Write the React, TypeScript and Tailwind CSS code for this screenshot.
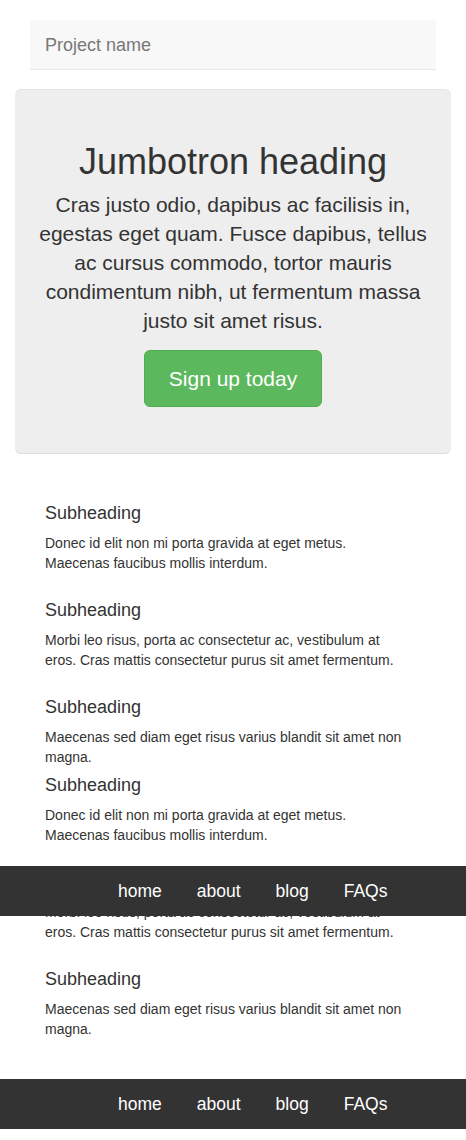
const sections = [
  [
    {
      title: "Subheading",
      body: "Donec id elit non mi porta gravida at eget metus. Maecenas faucibus mollis interdum.",
    },
    {
      title: "Subheading",
      body: "Morbi leo risus, porta ac consectetur ac, vestibulum at eros. Cras mattis consectetur purus sit amet fermentum.",
    },
    {
      title: "Subheading",
      body: "Maecenas sed diam eget risus varius blandit sit amet non magna.",
    },
  ],
  [
    {
      title: "Subheading",
      body: "Donec id elit non mi porta gravida at eget metus. Maecenas faucibus mollis interdum.",
    },
    {
      title: "Subheading",
      body: "Morbi leo risus, porta ac consectetur ac, vestibulum at eros. Cras mattis consectetur purus sit amet fermentum.",
    },
    {
      title: "Subheading",
      body: "Maecenas sed diam eget risus varius blandit sit amet non magna.",
    },
  ],
];

const links = ["home", "about", "blog", "FAQs"];

function NavBar() {
  return (
    <ul className="flex h-[50px] items-center gap-[35px] bg-[#333] pl-[118px] text-[17.5px] leading-[20px] text-white">
      {links.map((l) => (
        <li key={l}>
          <a href="#">{l}</a>
        </li>
      ))}
    </ul>
  );
}

export default function App() {
  return (
    <div className="relative min-h-[1140px] bg-white pt-[20px] font-['Liberation_Sans',Arial,sans-serif] text-[14px] leading-[20px] text-[#333]">
      <div className="px-[15px]">
        <div className="mx-[15px] flex h-[50px] items-center border-b border-[#e7e7e7] bg-[#f8f8f8] px-[15px]">
          <span className="text-[18px] leading-[20px] text-[#777]">Project name</span>
        </div>

        <div className="mt-[19px] flex flex-col items-center rounded-[6px] border-t border-b border-t-[#e4e4e4] border-b-[#dcdcdc] bg-[#eee] px-[20px] pt-[52px] pb-[46px] text-center">
          <h1 className="mb-[8px] text-[36px] leading-[1.1]">Jumbotron heading</h1>
          <p className="mb-[15px] text-[21px] leading-[29px]">
            Cras justo odio, dapibus ac facilisis in, egestas eget quam. Fusce dapibus, tellus ac cursus commodo,
            tortor mauris condimentum nibh, ut fermentum massa justo sit amet risus.
          </p>
          <a
            href="#"
            className="flex h-[57px] items-center rounded-[6px] border border-[#4cae4c] bg-[#5cb85c] px-[24px] text-[21px] leading-[29px] text-white"
          >
            Sign up today
          </a>
        </div>

        <div className="pt-[49px] pr-[41px] pb-[40px] pl-[30px]">
          {sections.map((col, ci) => (
            <div key={ci} className={ci > 0 ? "mt-[8px]" : ""}>
              {col.map((s, i) => (
                <div key={i} className={i > 0 ? "mt-[27px]" : ""}>
                  <h4 className="mb-[10px] text-[18px] leading-[20px]">{s.title}</h4>
                  <p>{s.body}</p>
                </div>
              ))}
            </div>
          ))}
        </div>
      </div>

      <NavBar />

      <div className="absolute top-[866px] right-0 left-0">
        <NavBar />
      </div>
    </div>
  );
}
